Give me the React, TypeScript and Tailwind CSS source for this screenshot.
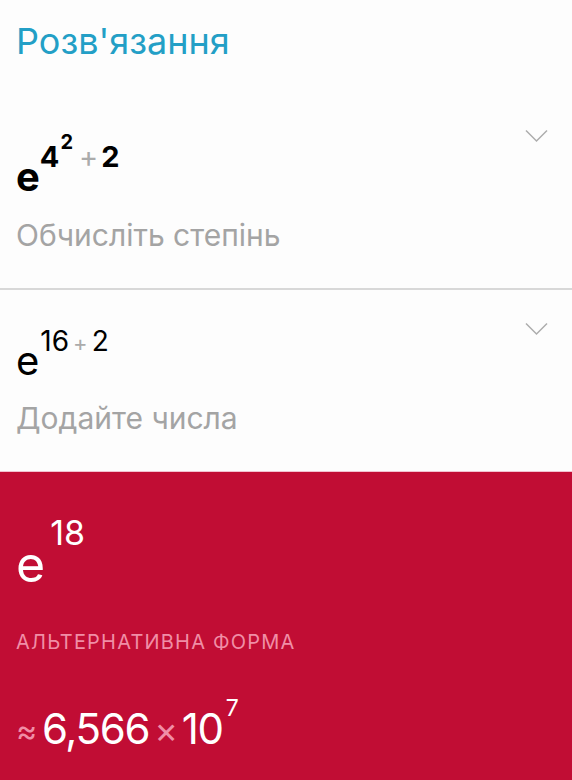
const font = { fontFamily: "Inter, 'Noto Sans', sans-serif" };

function Chevron({ top }: { top: string }) {
  return (
    <svg width="23" height="14" viewBox="0 0 23 14" className={`absolute right-[24px] ${top}`}>
      <path d="M1 1.5 L11.5 12 L22 1.5" fill="none" stroke="#adadad" strokeWidth="1.5" />
    </svg>
  );
}

export default function App() {
  return (
    <div className="flex h-[780px] w-[572px] flex-col overflow-hidden bg-[#fdfdfd]" style={font}>
      <div className="h-[100px] px-4 pt-[19px]">
        <h1 className="text-[36px] leading-[44px] text-[#239fc6]">Розв'язання</h1>
      </div>

      <div className="relative h-[190px] border-b-2 border-[#d8d8d8] px-4">
        <Chevron top="top-[29px]" />
        <div className="pt-[32px] text-[40px] font-bold leading-[48px] text-black">
          e
          <span className="align-[24px] text-[29px] leading-none">
            4<span className="ml-[1px] align-[18px] text-[20px]">2</span>
            <span className="ml-[6px] font-normal text-[#ababab]">+</span>
            <span className="ml-[3px]">2</span>
          </span>
        </div>
        <p className="mt-[16px] text-[30px] leading-[36px] text-[#a4a4a4]">Обчисліть степінь</p>
      </div>

      <div className="relative h-[181px] px-4">
        <Chevron top="top-[32px]" />
        <div className="pt-[37px] text-[40px] leading-[48px] text-black">
          e
          <span className="ml-[1px] align-[24px] text-[28px] leading-none">
            16
            <span className="mx-[4px] text-[22px] text-[#ababab]">+</span>
            2
          </span>
        </div>
        <p className="mt-[15px] text-[30px] leading-[36px] text-[#a4a4a4]">Додайте числа</p>
      </div>

      <div className="flex-1 border-t border-[#f2c2cf] bg-[#c10d34] px-4 text-white">
        <div className="pt-[44px] text-[50px] leading-[60px]">
          e
          <span className="ml-[5px] align-[37px] text-[34px] leading-none">18</span>
        </div>
        <p className="mt-[36px] text-[20px] leading-[24px] tracking-[1.2px] text-[#f08ea6]">АЛЬТЕРНАТИВНА ФОРМА</p>
        <div className="mt-[43px] text-[42px] leading-[50px] tracking-[-1.3px]">
          <span className="mr-[6px] align-[2px] text-[32px] leading-none text-[#f08ea6]">≈</span>
          6,566
          <span className="mx-[5px] align-[1px] text-[36px] leading-none text-[#f08ea6]">×</span>
          10
          <span className="ml-[3px] align-[28px] text-[23px] leading-none">7</span>
        </div>
      </div>
    </div>
  );
}
